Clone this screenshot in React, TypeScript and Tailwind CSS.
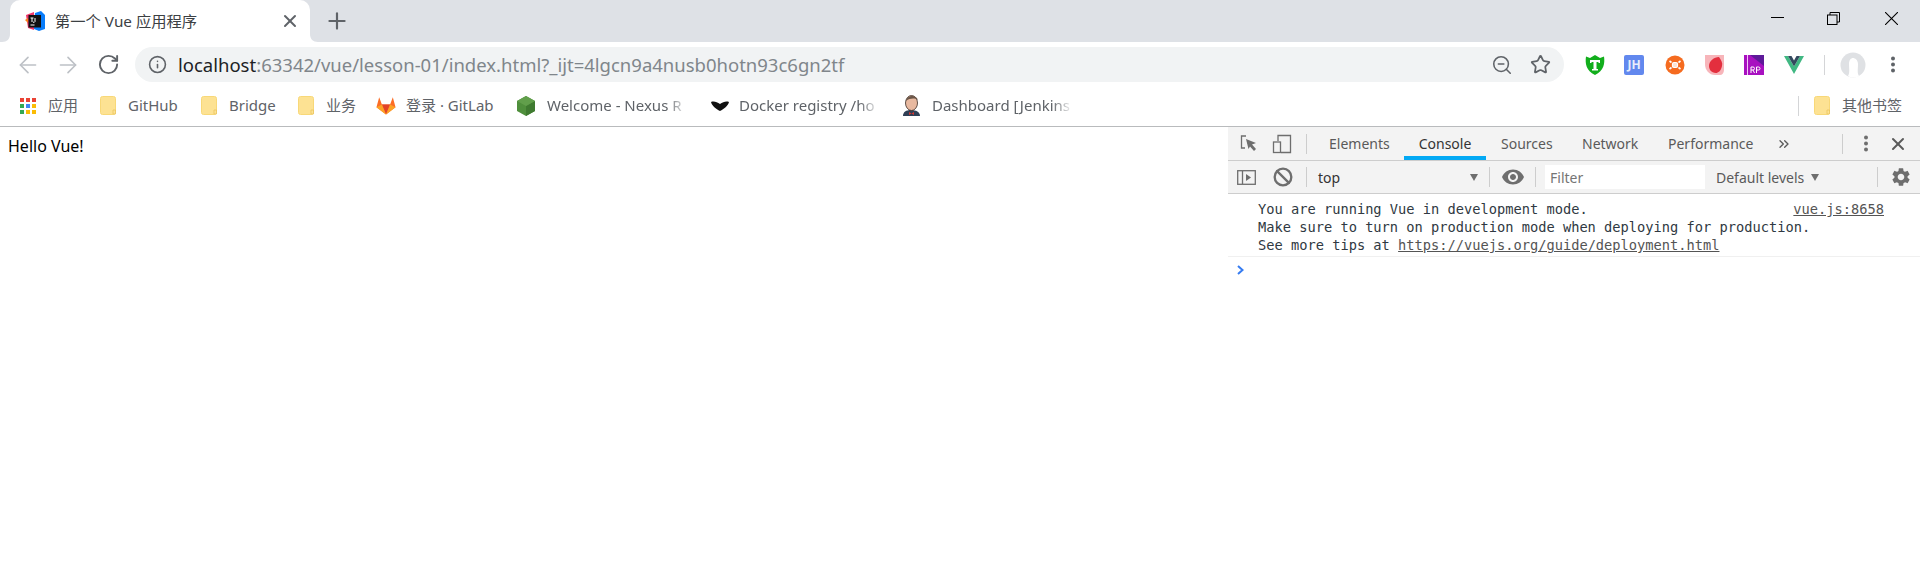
import { X, Plus, ArrowLeft, ArrowRight, RotateCw, Info, ZoomOut, Star, ChevronsRight, Ban } from "lucide-react";
import { MdSettings, MdVisibility } from "react-icons/md";

const sans = "font-['Noto_Sans','Noto_Sans_CJK_SC',sans-serif]";

function Folder({ className = "" }: { className?: string }) {
  return (
    <svg width="16" height="19" viewBox="0 0 16 19" className={`shrink-0 ${className}`}>
      <rect x="0.5" y="0.5" width="15" height="18" rx="2" fill="#fde293" stroke="#f8d878" />
      <path d="M13 18v-4h2.5v4z" fill="#fde293" stroke="#e8c25a" strokeWidth="0.7" />
    </svg>
  );
}

function AppsIcon() {
  const colors = ["#ea4335", "#ea4335", "#ea4335", "#34a853", "#4285f4", "#fbbc05", "#34a853", "#fbbc05", "#fbbc05"];
  return (
    <div className="grid w-4 h-4 shrink-0 grid-cols-3 gap-[2px]">
      {colors.map((c, i) => (
        <svg key={i} viewBox="0 0 4 4" className="w-full h-full">
          <rect width="4" height="4" fill={c} />
        </svg>
      ))}
    </div>
  );
}

function GitLabIcon() {
  return (
    <svg width="20" height="19" viewBox="0 0 22 20" className="shrink-0">
      <path d="M11 20L0.5 12 3.5 1l3 8h9l3-8 3 11z" fill="#fc6d26" />
      <path d="M11 20L6.500 9h9z" fill="#e24329" />
      <path d="M11 20L0.500 12 6.500 9z" fill="#fca326" />
      <path d="M11 20l10.500-8-6-3z" fill="#fca326" />
    </svg>
  );
}

function NexusIcon() {
  return (
    <svg width="18" height="20" viewBox="0 0 18 20" className="shrink-0">
      <path d="M9 0l9 5v10l-9 5-9-5V5z" fill="#4f8f3c" />
      <path d="M9 10l9-5v10l-9 5z" fill="#3f7a30" />
      <path d="M9 0l9 5-9 5-9-5z" fill="#619f4b" />
    </svg>
  );
}

function DockerIcon() {
  return (
    <svg width="18" height="11" viewBox="0 0 18 11" className="shrink-0">
      <path d="M0 2c3-1 6 0 9 2 3-2 6-3 9-2-1 4-5 7-9 9C5 9 1 6 0 2z" fill="#111" />
    </svg>
  );
}

function JenkinsIcon() {
  return (
    <svg width="19" height="21" viewBox="0 0 19 21" className="shrink-0">
      <path d="M1 21c0-4 3-6 8-6s9 2 9 6z" fill="#2f3f55" />
      <ellipse cx="9.500" cy="8" rx="6" ry="7.500" fill="#e8b9a0" stroke="#3a2a22" strokeWidth="0.800" />
      <path d="M4 6c1-6 10-7 12-1-3-2-8-2-12 1z" fill="#6b5648" />
      <path d="M7 17l2.500 1.500L12 17v3l-2.500-1.500L7 20z" fill="#d33833" />
    </svg>
  );
}

function ShieldIcon() {
  return (
    <svg width="20" height="20" viewBox="0 0 20 20" className="shrink-0">
      <path d="M1 1.500L5 3l5-3 5 3 4-1.500c1 7 0 14-9 18.500C1 15.500 0 8.500 1 1.500z" fill="#12ae1c" />
      <path d="M5 5h10v3h-1.500V7H11.500v7H13v1.500H7V14h1.500V7h-2v1H5z" fill="#fff" />
    </svg>
  );
}

function OrangeIcon() {
  return (
    <svg width="20" height="20" viewBox="0 0 20 20" className="shrink-0">
      <circle cx="10" cy="10" r="9.500" fill="#f56b1f" />
      <rect x="7.500" y="7.500" width="5" height="5" rx="1.500" fill="#fbe3d4" stroke="#fff" strokeWidth="1.200" />
      <path d="M4.500 6l2 1.500M15.500 6l-2 1.500M4.500 14l2-1.500M15.500 14l-2-1.500" stroke="#fff" strokeWidth="1.600" />
    </svg>
  );
}

function RedIcon() {
  return (
    <svg width="20" height="20" viewBox="0 0 20 20" className="shrink-0">
      <path d="M1 0h19v15c0 3-2 5-4 5h-5C5 20 1 15 1 9z" fill="#f7b5ba" />
      <path d="M15 2c2 3 4 6 3 9-1 5-4 7-6 7-5 0-7-4-7-7 0-5 5-9 10-9z" fill="#e32f3e" />
    </svg>
  );
}

function RpIcon() {
  return (
    <svg width="20" height="20" viewBox="0 0 20 20" className="shrink-0">
      <rect width="20" height="20" fill="#a811c0" />
      <path d="M6 0h14v11z" fill="#5e1a99" />
      <rect x="3" y="0" width="1" height="20" fill="#f3c6f8" />
      <path d="M7 18v-6h2a1.500 1.500 0 010 3H7M9 15l1.500 3M12.500 18v-6h2a1.500 1.500 0 010 3h-2" fill="none" stroke="#fff" strokeWidth="1" />
    </svg>
  );
}

function VueIcon() {
  return (
    <svg width="20" height="18" viewBox="0 0 20 18" className="shrink-0">
      <path d="M0 0h4l6 10.500L16 0h4L10 18z" fill="#41b883" />
      <path d="M4 0h3.500L10 4.500 12.500 0H16l-6 10.500z" fill="#34495e" />
    </svg>
  );
}

function Avatar() {
  return (
    <svg width="26" height="26" viewBox="0 0 26 26" className="shrink-0">
      <circle cx="13" cy="13" r="12.500" fill="#dfe1e4" />
      <path d="M8 24c2-3 1-7 1-12 0-4 2-6 4-6s5 2 5 6c0 5-1 9 1 12-3 2-8 2-11 0z" fill="#fff" />
    </svg>
  );
}

function Dots({ color, className = "" }: { color: string; className?: string }) {
  return (
    <svg width="6" height="17" viewBox="0 0 6 17" className={`shrink-0 ${className}`}>
      <circle cx="3" cy="2.500" r="2" fill={color} />
      <circle cx="3" cy="8.500" r="2" fill={color} />
      <circle cx="3" cy="14.500" r="2" fill={color} />
    </svg>
  );
}

function InspectIcon() {
  return (
    <svg width="18" height="18" viewBox="0 0 18 18" className="shrink-0">
      <path d="M6 1H1.500v12H5" fill="none" stroke="#6e6e6e" strokeWidth="1.300" />
      <path d="M6 4l10 4-4 1.500 4 4.500-2 2-4-4.500L8.500 14z" fill="#6e6e6e" />
    </svg>
  );
}

function DeviceIcon() {
  return (
    <svg width="20" height="20" viewBox="0 0 20 20" className="shrink-0">
      <path d="M6 7V1.500h12.500v17H9" fill="none" stroke="#6e6e6e" strokeWidth="1.300" />
      <rect x="1.500" y="8" width="7" height="10.500" fill="none" stroke="#6e6e6e" strokeWidth="1.300" />
    </svg>
  );
}

function SidebarIcon() {
  return (
    <svg width="19" height="15" viewBox="0 0 19 15" className="shrink-0">
      <rect x="0.700" y="0.700" width="17.600" height="13.600" fill="none" stroke="#6e6e6e" strokeWidth="1.300" />
      <path d="M5.500 1v13" stroke="#6e6e6e" strokeWidth="1.300" />
      <path d="M9 4l5 3.500L9 11z" fill="#6e6e6e" />
    </svg>
  );
}

function Bookmarks() {
  const fade = "overflow-hidden whitespace-nowrap [mask-image:linear-gradient(to_right,black_85%,transparent)]";
  return (
    <div className={`flex h-[37px] items-center pb-[4px] text-[15px] text-[#5f6368] ${sans}`}>
      <div className="ml-5 flex items-center"><AppsIcon /><span className="ml-3 w-[52px]">应用</span></div>
      <div className="flex items-center"><Folder /><span className="ml-3 w-[73px]">GitHub</span></div>
      <div className="flex items-center"><Folder /><span className="ml-3 w-[69px]">Bridge</span></div>
      <div className="flex items-center"><Folder /><span className="ml-3 w-[50px]">业务</span></div>
      <div className="flex items-center"><GitLabIcon /><span className="ml-[10px] w-[111px]">登录 · GitLab</span></div>
      <div className="flex items-center"><NexusIcon /><span className={`ml-3 w-[141px] ${fade}`}>Welcome - Nexus R</span></div>
      <div className="ml-[23px] flex items-center"><DockerIcon /><span className={`ml-[10px] w-[141px] ${fade}`}>Docker registry /ho</span></div>
      <div className="ml-[22px] flex items-center"><JenkinsIcon /><span className={`ml-[11px] w-[141px] ${fade}`}>Dashboard [Jenkins</span></div>
      <div className="ml-auto mr-[18px] flex items-center">
        <div className="mr-[15px] h-5 w-px bg-[#d4d5d7]" />
        <Folder />
        <span className="ml-3">其他书签</span>
      </div>
    </div>
  );
}

function TitleBar() {
  return (
    <div className="flex h-[42px] bg-[#dee1e6]">
      <div className={`relative ml-[10px] flex w-[300px] items-center rounded-t-[10px] bg-white pl-[15px] pr-[10px] ${sans}`}>
        <svg width="8" height="8" viewBox="0 0 8 8" className="absolute bottom-0 -left-2">
          <path d="M8 0v8H0c5 0 8-3 8-8z" fill="#fff" />
        </svg>
        <svg width="8" height="8" viewBox="0 0 8 8" className="absolute bottom-0 -right-2">
          <path d="M0 0v8h8C3 8 0 5 0 0z" fill="#fff" />
        </svg>
        <svg width="20" height="20" viewBox="0 0 20 20" className="shrink-0">
          <path d="M1 4l8-3v18l-6-2z" fill="#f0386b" />
          <path d="M10 2l6-2 4 4v14l-6 2-5-2z" fill="#087cfa" />
          <path d="M0 9l3-2v5z" fill="#fc801d" />
          <rect x="3.500" y="4" width="12.500" height="12.500" fill="#111" />
          <path d="M5.500 7h3M7 7v4M10 7v3.500a1.300 1.300 0 01-2 .5M5.500 14h4" stroke="#fff" strokeWidth="1" fill="none" />
        </svg>
        <span className="ml-[10px] text-[15.300px] text-[#3c4043]">第一个 Vue 应用程序</span>
        <X className="ml-auto" size={20} strokeWidth={2.400} color="#5f6368" />
      </div>
      <Plus className="ml-[14px] mt-2" size={26} strokeWidth={2} color="#5f6368" />
      <div className="ml-auto flex items-start pt-[12px]">
        <svg width="13" height="13" viewBox="0 0 13 13" className="mr-[43px]">
          <path d="M0 5.500h13" stroke="#000" />
        </svg>
        <svg width="13" height="13" viewBox="0 0 13 13" className="mr-[45px]">
          <rect x="0.500" y="3" width="9.500" height="9.500" fill="none" stroke="#000" />
          <path d="M3 3V0.500h9.500V10H10" fill="none" stroke="#000" />
        </svg>
        <svg width="13" height="13" viewBox="0 0 13 13" className="mr-[22px]">
          <path d="M0 0l13 13M13 0L0 13" stroke="#000" strokeWidth="1.100" />
        </svg>
      </div>
    </div>
  );
}

function Toolbar() {
  return (
    <div className="flex h-[47px] items-center bg-white pb-[2px]">
      <ArrowLeft className="ml-[15px]" size={26} strokeWidth={1.500} color="#bdc1c6" />
      <ArrowRight className="ml-[14px]" size={26} strokeWidth={1.500} color="#bdc1c6" />
      <RotateCw className="ml-[16px]" size={23} strokeWidth={2} color="#5f6368" />
      <div className={`ml-[15px] flex h-[35px] w-[1429px] items-center rounded-full bg-[#f1f3f4] pl-[13px] pr-[13px] ${sans}`}>
        <Info size={19} strokeWidth={2} color="#5f6368" />
        <span className="ml-[11px] text-[18.500px] text-[#80868b]"><span className="text-[#202124]">localhost</span>:63342/vue/lesson-01/index.html?_ijt=4lgcn9a4nusb0hotn93c6gn2tf</span>
        <ZoomOut className="ml-auto" size={22} strokeWidth={1.700} color="#5f6368" />
        <Star className="ml-[17px]" size={21} strokeWidth={2} color="#5f6368" />
      </div>
      <div className="ml-[21px] flex items-center">
        <ShieldIcon />
        <div className={`ml-[19px] flex h-5 w-5 items-center justify-center rounded-[2px] bg-[#6288ee] text-[12px] font-bold text-[#e8edfb] ${sans}`}>JH</div>
        <div className="ml-[21px]"><OrangeIcon /></div>
        <div className="ml-[19px]"><RedIcon /></div>
        <div className="ml-5"><RpIcon /></div>
        <div className="ml-5"><VueIcon /></div>
        <div className="ml-[20px] h-5 w-px bg-[#d4d5d7]" />
        <div className="ml-[15px]"><Avatar /></div>
        <Dots className="ml-6" color="#5f6368" />
      </div>
    </div>
  );
}

function DevTools() {
  return (
    <div className={`flex w-[692px] flex-col ${sans}`}>
      <div className="flex h-[34px] items-center border-b border-[#cdcdcd] bg-[#f3f3f3] text-[14px] text-[#5a5a5a]">
        <div className="ml-[12px]"><InspectIcon /></div>
        <div className="ml-[14px]"><DeviceIcon /></div>
        <div className="ml-[14px] h-5 w-px bg-[#cdcdcd]" />
        <span className="ml-[22px] w-[75px] leading-none">Elements</span>
        <div className="flex h-[33px] w-[82px] items-center justify-center border-b-[4px] border-[#03a9f4] pt-[4px] text-[#333]">Console</div>
        <span className="ml-[15px] w-[81px]">Sources</span>
        <span className="w-[86px]">Network</span>
        <span className="w-[108px]">Performance</span>
        <ChevronsRight size={16} strokeWidth={2} color="#5a5a5a" />
        <div className="ml-[50px] h-5 w-px bg-[#cdcdcd]" />
        <Dots className="ml-[20px]" color="#6e6e6e" />
        <X className="ml-[19px]" size={20} strokeWidth={2.400} color="#5a5a5a" />
      </div>
      <div className="flex h-[33px] items-center border-b border-[#cdcdcd] bg-[#f3f3f3] text-[14px] text-[#5a5a5a]">
        <div className="ml-[9px]"><SidebarIcon /></div>
        <Ban className="ml-[17px]" size={20} strokeWidth={2.800} color="#6e6e6e" />
        <div className="ml-[13px] h-5 w-px bg-[#cdcdcd]" />
        <span className="ml-[11px] w-[152px] text-[#333]">top</span>
        <div className="h-0 w-0 border-x-[4px] border-t-[7px] border-x-transparent border-t-[#6e6e6e]" />
        <div className="ml-[11px] h-5 w-px bg-[#cdcdcd]" />
        <MdVisibility className="ml-[11px]" size={24} color="#6e6e6e" />
        <div className="ml-[10px] h-5 w-px bg-[#cdcdcd]" />
        <div className="ml-[9px] flex h-6 w-[160px] items-center bg-white pl-[5px] text-[#757575]">Filter</div>
        <span className="ml-[11px] w-[95px]">Default levels</span>
        <div className="h-0 w-0 border-x-[4px] border-t-[7px] border-x-transparent border-t-[#6e6e6e]" />
        <div className="ml-[58px] h-5 w-px bg-[#cdcdcd]" />
        <MdSettings className="ml-[12px]" size={22} color="#6e6e6e" />
      </div>
      <div className="border-b border-[#f0f0f0] pb-[2px] pl-[30px] pr-[36px] pt-[6px] font-['DejaVu_Sans_Mono',monospace] text-[13.700px] leading-[18px] text-[#303942]">
        <a className="float-right underline text-[#545454]">vue.js:8658</a>
        <div>You are running Vue in development mode.</div>
        <div>Make sure to turn on production mode when deploying for production.</div>
        <div>See more tips at <span className="underline text-[#545454]">https://vuejs.org/guide/deployment.html</span></div>
      </div>
      <svg width="8" height="10" viewBox="0 0 8 10" className="ml-[9px] mt-2">
        <path d="M1 1l4.500 4L1 9" fill="none" stroke="#367cf1" strokeWidth="2" />
      </svg>
    </div>
  );
}

export default function App() {
  return (
    <div className="flex h-[565px] w-[1920px] flex-col overflow-hidden bg-white">
      <TitleBar />
      <Toolbar />
      <Bookmarks />
      <div className="flex flex-1 border-t border-[#b9bbbd]">
        <div className={`flex-1 pl-2 pt-[7px] text-[16px] text-black ${sans}`}>Hello Vue!</div>
        <DevTools />
      </div>
    </div>
  );
}
